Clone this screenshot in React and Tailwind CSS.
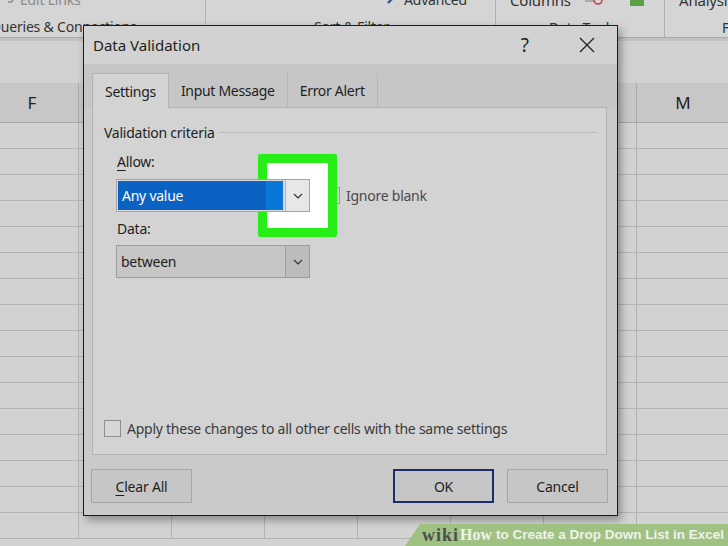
import React from "react";

const COLS = ["F", "G", "H", "I", "J", "K", "L", "M"];
const ROWS = Array.from({ length: 16 }, (_, i) => i);

function Chevron({ color = "#333" }) {
  return (
    <svg width="10" height="6" viewBox="0 0 10 6">
      <path d="M1 1 L5 5 L9 1" fill="none" stroke={color} strokeWidth="1.2" />
    </svg>
  );
}

function Ribbon() {
  return (
    <div className="flex h-[38px] overflow-hidden bg-[#d5d5d5] border-b border-[#a9a9a9] text-[14px] tracking-[-0.2px] text-[#333]">
      <div className="w-[206px] shrink-0 border-r border-[#b2b2b2] flex flex-col">
        <div className="h-[22px] -mt-[12px] flex items-center gap-[5px] pl-[3px] text-[#8a8a8a]">
          <svg width="12" height="12" viewBox="0 0 12 12">
            <path d="M2 6 a3 3 0 0 1 3-3 h2 M10 6 a3 3 0 0 1-3 3 h-2" fill="none" stroke="#8a8a8a" strokeWidth="1.3" />
          </svg>
          <span>Edit Links</span>
        </div>
        <div className="mt-[7px] -ml-[10px] leading-[20px] whitespace-nowrap">Queries &amp; Connections</div>
      </div>
      <div className="w-[290px] shrink-0 border-r border-[#b2b2b2] flex flex-col">
        <div className="h-[22px] -mt-[12px] flex items-center gap-[6px] pl-[180px]">
          <svg width="12" height="12" viewBox="0 0 12 12">
            <path d="M2 10 L9 3" stroke="#3b4f9a" strokeWidth="2.4" />
          </svg>
          <span>Advanced</span>
        </div>
        <div className="mt-[7px] pl-[108px] leading-[20px] whitespace-nowrap">Sort &amp; Filter</div>
      </div>
      <div className="w-[169px] shrink-0 border-r border-[#b2b2b2] flex flex-col">
        <div className="h-[22px] -mt-[11px] flex items-center pl-[14px]">
          <span className="text-[15px]">Columns</span>
          <svg className="ml-[14px]" width="18" height="12" viewBox="0 0 18 12">
            <rect x="0" y="2" width="10" height="6" fill="#aaa" />
            <circle cx="13" cy="6" r="4" fill="none" stroke="#c04040" strokeWidth="1.6" />
          </svg>
          <svg className="ml-[24px]" width="20" height="12" viewBox="0 0 20 12">
            <path d="M3 3 L10 0 L17 3 L17 12 L3 12 Z" fill="#5aa046" />
            <path d="M3 3 L10 6 L17 3" fill="none" stroke="#3f7d30" strokeWidth="1" />
          </svg>
        </div>
        <div className="mt-[7px] pl-[53px] leading-[20px] whitespace-nowrap">Data Tools</div>
      </div>
      <div className="flex-1 flex flex-col">
        <div className="h-[22px] -mt-[11px] flex items-center pl-[14px] text-[15px]">Analysis</div>
        <div className="mt-[7px] pl-[57px] leading-[20px] whitespace-nowrap">Forecast</div>
      </div>
    </div>
  );
}

function Sheet() {
  return (
    <div>
      <div className="h-[45px] bg-[#d1d1d1] border-t-[3px] border-[#c2c2c2]" />
      <div className="-ml-[14px] flex h-[40px] bg-[#c7c7c7] border-b border-[#a6a6a6]">
        {COLS.map((c) => (
          <div key={c} className="w-[93px] shrink-0 border-r border-[#a9a9a9] flex items-center justify-center text-[17px] text-[#1e1e1e]">
            {c}
          </div>
        ))}
      </div>
      {ROWS.map((r) => (
        <div key={r} className="-ml-[14px] flex h-[26px] border-b border-[#b4b4b4]">
          {COLS.map((c) => (
            <div key={c} className="w-[93px] shrink-0 border-r border-[#b2b2b2]" />
          ))}
        </div>
      ))}
    </div>
  );
}

function Checkbox() {
  return <div className="w-[17px] h-[17px] shrink-0 border border-[#8e8e8e] bg-[#d6d6d6]" />;
}

function Button({ children, primary }) {
  return (
    <div
      className={`w-[101px] h-[34px] flex items-center justify-center text-[14px] tracking-[-0.2px] text-[#1e1e1e] bg-[#c6c6c6] border ${
        primary ? "border-[#1d2c6b] border-[2px]" : "border-[#a6a6a6]"
      }`}
    >
      {children}
    </div>
  );
}

function Dialog() {
  return (
    <div className="absolute left-[83px] top-[25px] w-[535px] h-[491px] flex flex-col bg-[#cacaca] border border-[#1c1c1c] shadow-[3px_4px_8px_rgba(0,0,0,0.35)] text-[#1e1e1e]">
      <div className="h-[38px] shrink-0 flex items-center pl-[9px] bg-[#d2d2d2]">
        <span className="text-[15px]">Data Validation</span>
        <span className="ml-auto text-[19px] mr-[50px]">?</span>
        <svg className="mr-[22px]" width="16" height="16" viewBox="0 0 16 16">
          <path d="M1 1 L15 15 M15 1 L1 15" stroke="#222" strokeWidth="1.3" />
        </svg>
      </div>
      <div className="flex h-[43px] shrink-0 items-end pl-[8px] bg-[#c6c6c6] text-[14px] tracking-[-0.3px]">
        <div className="h-[35px] px-[12px] flex items-center bg-[#d3d3d3] border-t border-x border-[#b3b3b3] relative top-[1px]">
          Settings
        </div>
        <div className="h-[34px] px-[12px] flex items-center border-r border-[#b7b7b7]">Input Message</div>
        <div className="h-[34px] px-[12px] flex items-center border-r border-[#b7b7b7]">Error Alert</div>
      </div>
      <div className="mx-[8px] mr-[10px] h-[348px] shrink-0 flex flex-col bg-[#d3d3d3] border border-[#b3b3b3] text-[14px] tracking-[-0.25px]">
        <div className="mt-[14px] ml-[11px] h-[20px] flex items-center">
          <span>Validation criteria</span>
          <div className="ml-[4px] mr-[9px] flex-1 h-px bg-[#b9b9b9]" />
        </div>
        <div className="mt-[10px] ml-[24px] h-[20px] leading-[20px]">
          <span className="underline underline-offset-[3px]">A</span>llow:
        </div>
        <div className="mt-[7px] ml-[23px] flex items-center">
          <div className="relative z-20 w-[194px] h-[33px] flex border border-[#a3a3a3] bg-[#dadada]">
            <div className="m-[1px] w-[165px] flex items-center pl-[4px] text-white bg-[linear-gradient(to_right,#0a62c2_148px,#0a76d8_148px)]">
              Any value
            </div>
            <div className="ml-auto w-[24px] flex items-center justify-center bg-[#e7e7e7] border-l border-[#b6b6b6]">
              <Chevron />
            </div>
          </div>
          <div className="ml-[13px] w-[17px] h-[17px] border border-[#9a9a9a] bg-[#d6d6d6]" />
          <span className="ml-[6px] text-[#4a4a4a]">Ignore blank</span>
        </div>
        <div className="mt-[7px] ml-[24px] h-[20px] leading-[20px]">Data:</div>
        <div className="mt-[6px] ml-[23px] w-[194px] h-[33px] flex border border-[#9c9c9c] bg-[#c6c6c6]">
          <div className="flex items-center pl-[4px]">between</div>
          <div className="ml-auto w-[24px] flex items-center justify-center bg-[#bcbcbc] border-l border-[#9f9f9f]">
            <Chevron />
          </div>
        </div>
        <div className="mt-auto mb-[15px] ml-[11px] flex items-center">
          <Checkbox />
          <span className="ml-[6px] text-[#3a3a3a]">Apply these changes to all other cells with the same settings</span>
        </div>
      </div>
      <div className="mt-[14px] px-[7px] pr-[9px] flex">
        <Button>
          <span className="underline underline-offset-[3px]">C</span>lear All
        </Button>
        <div className="ml-auto flex gap-[13px]">
          <Button primary>OK</Button>
          <Button>Cancel</Button>
        </div>
      </div>
    </div>
  );
}

export default function App() {
  return (
    <div className="relative w-[728px] h-[546px] overflow-hidden bg-[#d2d2d2] font-['Noto_Sans',sans-serif]">
      <Ribbon />
      <Sheet />
      <Dialog />
      {/* highlight box */}
      <div className="absolute z-10 left-[258px] top-[154px] w-[79px] h-[83px] border-[9px] border-[#27ee17] bg-white rounded-[2px]" />
      {/* watermark */}
      <div className="absolute right-0 bottom-0 w-[323px] h-[22px] bg-[#9fc283] [clip-path:polygon(15px_0,100%_0,100%_100%,0_100%)] flex items-center pl-[17px] whitespace-nowrap">
        <span className="font-['Liberation_Serif',serif] font-bold text-[18px] tracking-[1px] text-[#4e4e4e]">wiki</span>
        <span className="ml-[1px] font-['Liberation_Serif',serif] font-bold text-[16px] text-[#eef3ea]">How</span>
        <span className="ml-[4px] font-['Liberation_Sans',sans-serif] font-bold text-[13.5px] text-[#eef3ea]">
          to Create a Drop Down List in Excel
        </span>
      </div>
    </div>
  );
}
